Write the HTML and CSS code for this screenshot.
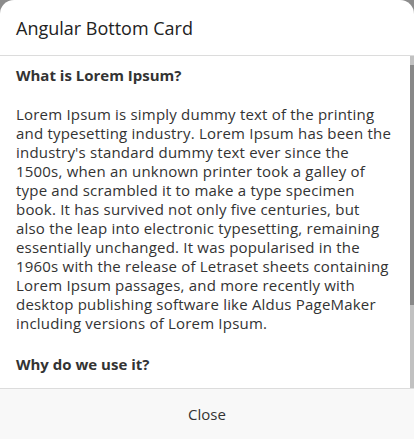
FILE: index.html
```html
<!DOCTYPE html>
<html>
<head>
<meta charset="utf-8">
<link rel="stylesheet" href="styles.css">
</head>
<body>
<div class="sheet">
  <div class="sheet-header">Angular Bottom Card</div>
  <div class="sheet-body">
    <div class="content">
      <h4 class="title">What is Lorem Ipsum?</h4>
      <p class="para">Lorem Ipsum is simply dummy text of the printing<br>and typesetting industry. Lorem Ipsum has been the<br>industry's standard dummy text ever since the<br>1500s, when an unknown printer took a galley of<br>type and scrambled it to make a type specimen<br>book. It has survived not only five centuries, but<br>also the leap into electronic typesetting, remaining<br>essentially unchanged. It was popularised in the<br>1960s with the release of Letraset sheets containing<br>Lorem Ipsum passages, and more recently with<br>desktop publishing software like Aldus PageMaker<br>including versions of Lorem Ipsum.</p>
      <h4 class="title">Why do we use it?</h4>
    </div>
    <div class="scrollbar"><div class="thumb"></div></div>
  </div>
  <div class="sheet-footer">Close</div>
</div>
</body>
</html>
```
FILE: styles.css
```css
html, body {
  margin: 0;
  padding: 0;
}
body {
  background: #8c8c8c;
  font-family: "Open Sans", "Noto Sans", sans-serif;
  color: #333;
  width: 414px;
  height: 439px;
  overflow: hidden;
}
.sheet {
  height: 439px;
  background: #fff;
  border-radius: 14px 14px 0 0;
  display: flex;
  flex-direction: column;
}
.sheet-header {
  height: 55px;
  flex: none;
  border-bottom: 1px solid #dcdcdc;
  display: flex;
  align-items: center;
  padding: 0 16px;
  font-size: 18px;
  color: #222;
}
.sheet-body {
  flex: 1;
  min-height: 0;
  display: flex;
}
.content {
  flex: 1;
  min-width: 0;
  overflow: hidden;
  padding: 10px 0 0 16px;
}
.title {
  margin: 0 0 20px 0;
  font-size: 15px;
  line-height: 19px;
  font-weight: bold;
}
.para {
  margin: 0 0 22px 0;
  font-size: 15px;
  line-height: 19px;
  letter-spacing: 0.2px;
  white-space: nowrap;
}
.scrollbar {
  width: 4px;
  flex: none;
  background: #c1c1c1;
  padding-top: 9px;
}
.thumb {
  height: 240px;
  background: #888;
}
.sheet-footer {
  height: 50px;
  flex: none;
  border-top: 1px solid #dcdcdc;
  background: #f8f8f8;
  display: flex;
  align-items: center;
  justify-content: center;
  font-size: 15px;
  color: #333;
}
```
